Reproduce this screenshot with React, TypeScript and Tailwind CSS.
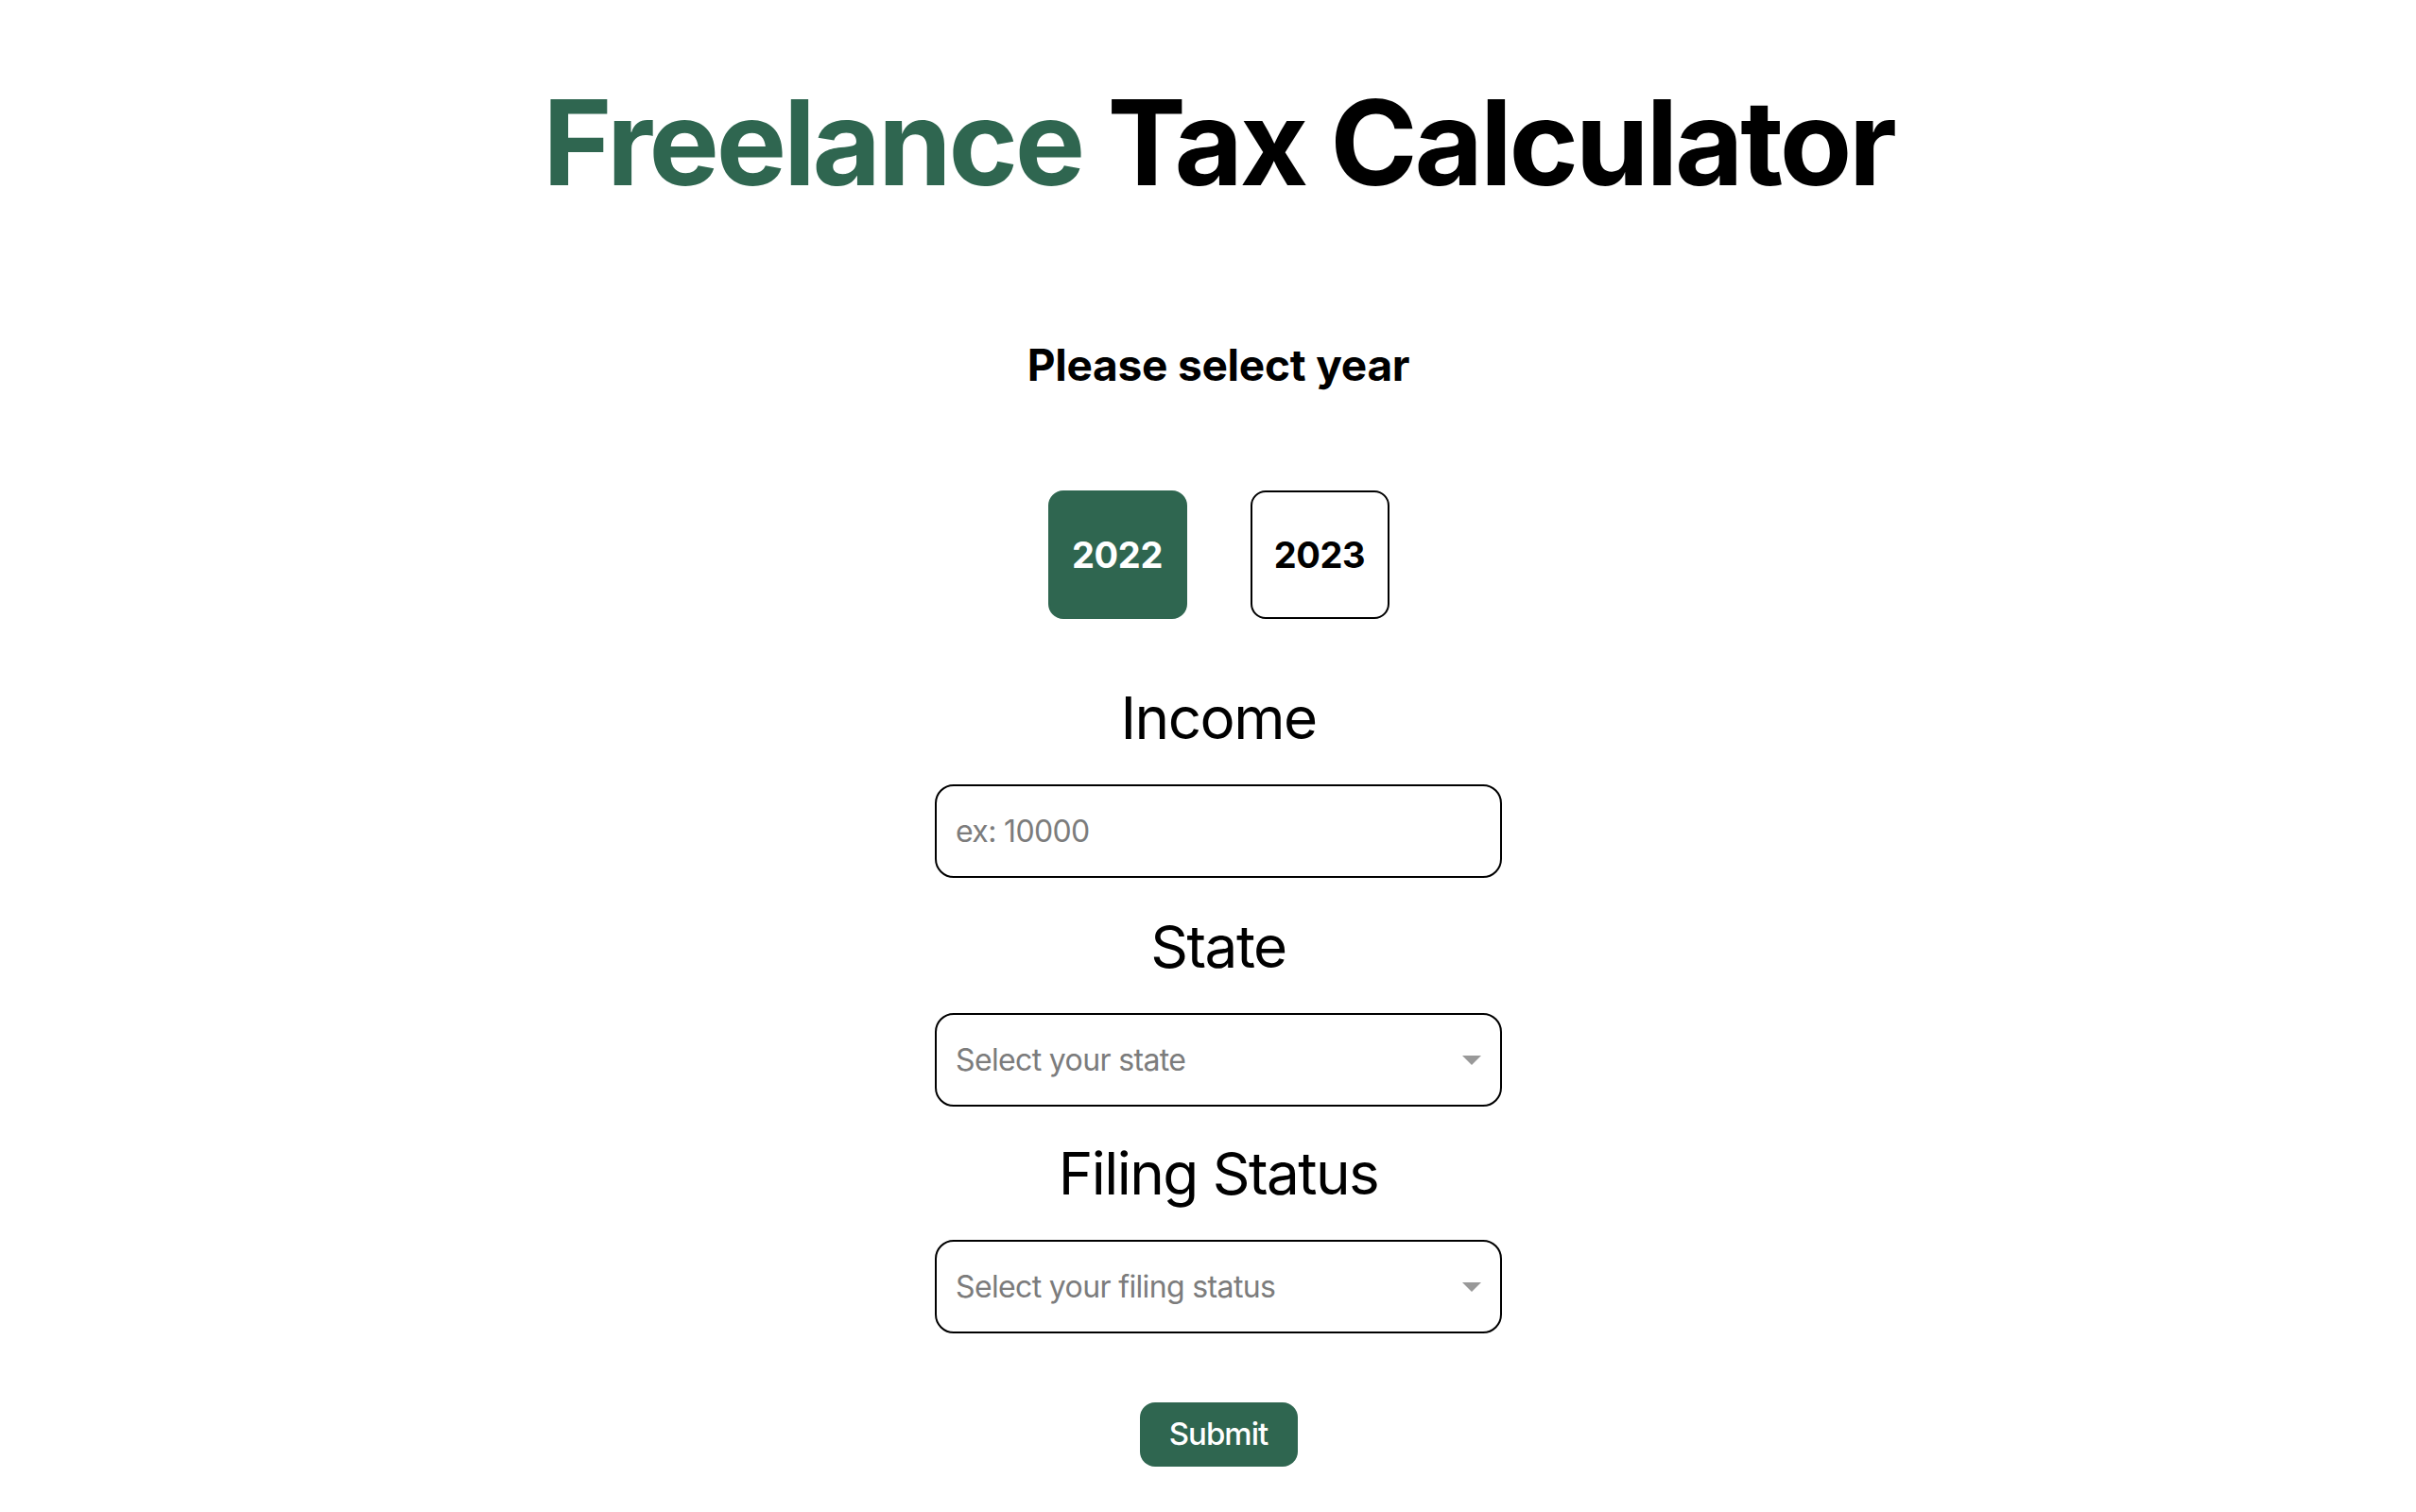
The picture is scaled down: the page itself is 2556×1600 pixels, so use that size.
import React, { useState } from "react";

const years = ["2022", "2023"];

function Field({ label, children }: { label: string; children: React.ReactNode }) {
  return (
    <div className="flex flex-col items-center">
      <p className="mt-[40px] text-[62px] leading-none font-normal tracking-[-0.025em] text-black">{label}</p>
      <div className="mt-[39px]">{children}</div>
    </div>
  );
}

function Select({ placeholder }: { placeholder: string }) {
  return (
    <div className="relative w-[600px]">
      <select
        defaultValue=""
        className="w-full h-[99px] appearance-none rounded-[20px] border-2 border-black bg-white pl-[20px] pr-[60px] text-[32px] tracking-[-0.02em] text-[#7c7c7c] outline-none"
      >
        <option value="" disabled hidden>
          {placeholder}
        </option>
      </select>
      <svg
        className="pointer-events-none absolute right-[22px] top-[45px]"
        width="20"
        height="10"
        viewBox="0 0 20 10"
      >
        <path d="M0 0 L20 0 L10 10 Z" fill="#999999" />
      </svg>
    </div>
  );
}

export default function App() {
  const [year, setYear] = useState("2022");

  return (
    <div className="min-h-screen bg-white pl-[22px] font-[Inter,'Noto_Sans',sans-serif] flex flex-col items-center">
      <h1 className="mt-[88px] text-[125px] leading-none font-bold tracking-[-0.026em] text-black">
        <span className="text-[#2f6650]">Freelance</span> Tax Calculator
      </h1>

      <p className="mt-[150px] text-[46px] leading-none font-bold tracking-[-0.005em] text-black">Please select year</p>

      <div className="mt-[110px] flex gap-[67px]">
        {years.map((y) => (
          <button
            key={y}
            onClick={() => setYear(y)}
            className={
              y === year
                ? "w-[147px] h-[136px] rounded-[16px] border-2 border-[#2f6650] bg-[#2f6650] text-white text-[38px] font-bold tracking-[-0.01em]"
                : "w-[147px] h-[136px] rounded-[16px] border-2 border-black bg-white text-black text-[38px] font-bold tracking-[-0.01em]"
            }
          >
            {y}
          </button>
        ))}
      </div>

      <div className="mt-[34px]">
        <Field label="Income">
          <input
            type="text"
            placeholder="ex: 10000"
            className="w-[600px] h-[99px] rounded-[20px] border-2 border-black bg-white px-[20px] text-[32px] tracking-[-0.02em] text-black outline-none placeholder:text-[#7c7c7c]"
          />
        </Field>
      </div>
      <div className="mt-[2px]">
        <Field label="State">
          <Select placeholder="Select your state" />
        </Field>
      </div>
      <div>
        <Field label="Filing Status">
          <Select placeholder="Select your filing status" />
        </Field>
      </div>

      <button className="mt-[73px] w-[167px] h-[68px] rounded-[16px] bg-[#2f6650] text-white text-[33px] font-medium tracking-[-0.03em]">
        Submit
      </button>
    </div>
  );
}
